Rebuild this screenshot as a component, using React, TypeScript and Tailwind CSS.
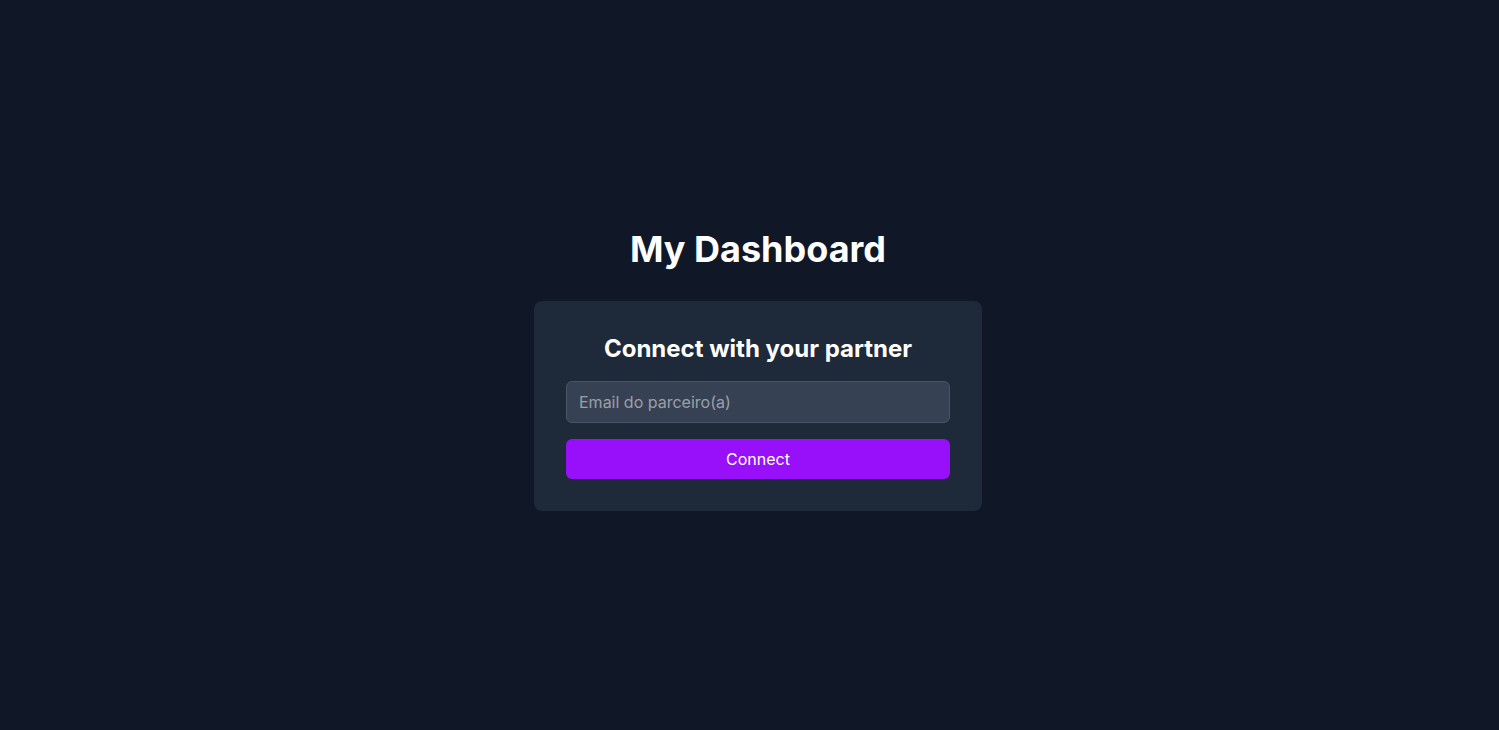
export default function App() {
  return (
    <main className="flex min-h-screen flex-col items-center justify-center bg-gray-900 pt-[10px] pl-[17px] font-['Inter',sans-serif] text-white">
      <h1 className="mb-8 text-4xl font-bold">My Dashboard</h1>
      <form
        className="w-full max-w-md rounded-lg bg-gray-800 p-8"
        onSubmit={(event) => event.preventDefault()}
      >
        <h2 className="mb-4 text-center text-2xl font-bold">Connect with your partner</h2>
        <input
          type="email"
          aria-label="Email do parceiro(a)"
          placeholder="Email do parceiro(a)"
          className="mb-4 block w-full rounded-md border border-gray-600 bg-gray-700 px-3 py-2 text-white placeholder:text-white/50"
        />
        <button type="submit" className="w-full rounded-md bg-purple-600 px-4 py-2 text-white">
          Connect
        </button>
      </form>
    </main>
  );
}
